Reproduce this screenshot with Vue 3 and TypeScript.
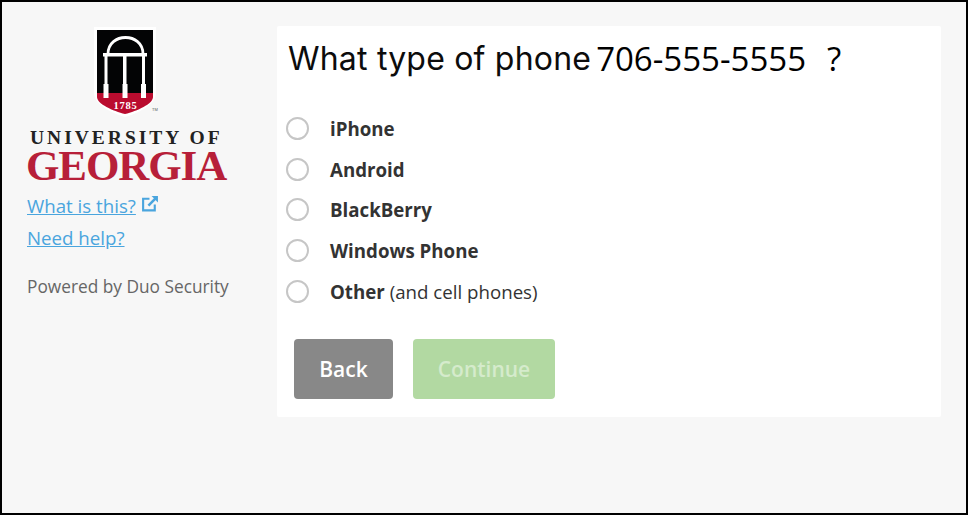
<template>
  <div class="page">
    <aside class="sidebar">
      <div class="logo">
        <div class="crest">
          <svg width="66" height="92" viewBox="0 0 66 92">
            <path d="M1 1H63V67C63 78 46 87 32 91C18 87 1 78 1 67Z" fill="#fff" />
            <path d="M4 4H60V67H4Z" fill="#030405" />
            <path d="M4 67H60V71C60 78 44 85 32 88C20 85 4 78 4 71Z" fill="#ba0c2f" />
            <path d="M15 28C15 6 50 6 50 28" fill="none" stroke="#fff" stroke-width="2.8" />
            <rect x="10" y="27" width="44" height="3.5" fill="#fff" />
            <rect x="11.5" y="30" width="3" height="30" fill="#fff" />
            <rect x="30" y="30" width="3.5" height="30" fill="#fff" />
            <rect x="49" y="30" width="3" height="30" fill="#fff" />
            <rect x="10.5" y="58" width="5" height="14" fill="#fff" />
            <rect x="29.5" y="58" width="5" height="14" fill="#fff" />
            <rect x="48" y="58" width="5" height="14" fill="#fff" />
            <text x="32.5" y="83" text-anchor="middle" class="year">1785</text>
            <text x="59" y="85" class="tm">TM</text>
          </svg>
        </div>
        <div class="wordmark-top">UNIVERSITY OF</div>
        <div class="wordmark-main">GEORGIA</div>
      </div>
      <a class="link" href="#">What is this?</a>
      <svg class="ext" width="18" height="18" viewBox="0 0 17 17">
        <path d="M8 3.5H2V14.5H13V9" fill="none" stroke="#4aa5de" stroke-width="2" />
        <path d="M7 10L14 3" fill="none" stroke="#4aa5de" stroke-width="2.4" />
        <path d="M10 1H16V7Z" fill="#4aa5de" />
      </svg>
      <br />
      <a class="link help" href="#">Need help?</a>
      <p class="powered">Powered by Duo Security</p>
    </aside>

    <main class="panel">
      <h1 class="title">
        <span>What type of phone</span>
        <span class="number">706-555-5555</span>
        <span class="mark">?</span>
      </h1>
      <div class="options">
        <label v-for="option in options" :key="option.name" class="option">
          <span class="radio"></span>
          <span><b>{{ option.name }}</b>{{ option.note }}</span>
        </label>
      </div>
      <div class="actions">
        <button class="back">Back</button>
        <button class="continue" disabled>Continue</button>
      </div>
    </main>
  </div>
</template>

<script setup lang="ts">
const options = [
  { name: 'iPhone', note: '' },
  { name: 'Android', note: '' },
  { name: 'BlackBerry', note: '' },
  { name: 'Windows Phone', note: '' },
  { name: 'Other', note: ' (and cell phones)' },
]
</script>

<style>
html,
body {
  margin: 0;
  background: #f7f7f7;
}
</style>

<style scoped>
.page {
  box-sizing: border-box;
  width: 968px;
  height: 515px;
  display: flex;
  padding: 24px 25px 0 0;
  background: #f7f7f7;
  border: 2px solid #000;
  font-family: 'Open Sans', sans-serif;
  color: #333;
}

.sidebar {
  width: 275px;
  flex: none;
  box-sizing: border-box;
  padding-left: 25px;
}

.logo {
  width: 202px;
  margin-bottom: 9px;
}

.crest {
  display: flex;
  height: 97px;
  padding-left: 66px;
}

.year {
  font-family: 'Liberation Serif', serif;
  font-size: 10.5px;
  font-weight: 700;
  fill: #fff;
  letter-spacing: 0.8px;
}

.tm {
  font-family: 'Liberation Sans', sans-serif;
  font-size: 4px;
  fill: #555;
}

.wordmark-top {
  margin-top: 7px;
  padding-left: 3px;
  font-family: 'Liberation Serif', serif;
  font-weight: 700;
  font-size: 19.5px;
  line-height: 16px;
  letter-spacing: 3px;
  color: #222;
  white-space: nowrap;
}

.wordmark-main {
  margin-top: 4px;
  margin-left: -1px;
  font-family: 'Liberation Serif', serif;
  font-weight: 700;
  font-size: 43px;
  line-height: 32px;
  letter-spacing: -1.1px;
  color: #b71f39;
  white-space: nowrap;
}

.link {
  font-size: 18.7px;
  line-height: 30px;
  color: #4aa5de;
}

.help {
  display: inline-block;
  margin-top: 2px;
}

.ext {
  margin-left: 5px;
}

.powered {
  margin: 22px 0 0;
  font-size: 17.3px;
  color: #666;
  white-space: nowrap;
}

.panel {
  flex: 1;
  height: 391px;
  box-sizing: border-box;
  padding: 11px 9px 0 9px;
  background: #fff;
  border-radius: 2px;
}

.title {
  display: flex;
  align-items: center;
  margin: 0;
  height: 42px;
  padding-left: 2px;
  font-family: Inter, sans-serif;
  font-size: 32px;
  font-weight: 400;
  letter-spacing: 0.2px;
  color: #0c0c0c;
  white-space: nowrap;
}

.number {
  margin-left: 5px;
  font-family: 'Open Sans', sans-serif;
  font-size: 33px;
  letter-spacing: 0;
  color: #000;
}

.mark {
  margin-left: 21px;
  font-family: 'Open Sans', sans-serif;
  font-size: 33px;
  color: #000;
}

.options {
  display: flex;
  flex-direction: column;
  margin-top: 29px;
}

.option {
  display: flex;
  align-items: center;
  gap: 21px;
  height: 40.7px;
  font-size: 18.7px;
  color: #333;
}

.radio {
  box-sizing: border-box;
  width: 23px;
  height: 23px;
  border: 2px solid #c6c6c6;
  border-radius: 50%;
  background: #fff;
}

.actions {
  display: flex;
  gap: 20px;
  margin-top: 28px;
  padding-left: 8px;
}

button {
  height: 60px;
  border: none;
  border-radius: 4px;
  padding: 0;
  font-family: 'Open Sans', sans-serif;
  font-size: 21px;
  font-weight: 600;
}

.back {
  width: 99px;
  background: #888;
  color: #fff;
}

.continue {
  width: 142px;
  background: #b2d9a2;
  color: #d5ebcc;
}
</style>
